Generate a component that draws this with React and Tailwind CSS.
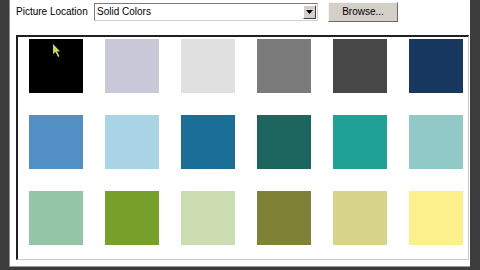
import React from "react";

const rows = [
  ["#000000", "#c8c8d8", "#e0e0e0", "#7a7a7a", "#474747", "#17375e"],
  ["#5290c6", "#a9d4e6", "#1a6e98", "#1d665f", "#1fa295", "#90c9c7"],
  ["#92c6a6", "#76a02a", "#cadcb0", "#7f8236", "#d7d38a", "#fbf08a"],
];

export default function App() {
  return (
    <div className="w-[480px] h-[270px] bg-[#3c3c3c] overflow-hidden" style={{ fontFamily: '"Liberation Sans", Arial, sans-serif' }}>
      <div className="ml-[9px] w-[461px] h-[267px] bg-white border-l border-[#8a8a8a] border-b border-b-[#9a9a9a] flex flex-col">
        <div className="flex items-center h-[24px] pl-[6px] pt-[0px]">
          <span className="text-[10px] text-black w-[78px] leading-none">Picture Location</span>
          <div className="w-[224px] h-[18px] border border-[#7a7a7a] border-r-[#d0d0d0] border-b-[#d0d0d0] flex items-center bg-white">
            <span className="text-[10px] text-black pl-[2px] flex-1 leading-none">Solid Colors</span>
            <div className="w-[13px] h-[14px] mr-[1px] bg-[#d4d0c8] border border-white border-r-[#404040] border-b-[#404040] flex items-center justify-center">
              <svg width="7" height="4" viewBox="0 0 7 4"><path d="M0 0h7L3.5 4z" fill="#000" /></svg>
            </div>
          </div>
          <div className="ml-[10px] w-[70px] h-[20px] bg-[#d4d0c8] border border-[#f4f4f4] border-r-[#6a6a6a] border-b-[#6a6a6a] flex items-center justify-center">
            <span className="text-[10px] text-black leading-none">Browse...</span>
          </div>
        </div>
        <div className="ml-[6px] mt-[11px] w-[453px] h-[225px] border-t-2 border-l-2 border-t-[#202020] border-l-[#202020] border-r border-b border-r-[#c8c8c8] border-b-[#c8c8c8] relative">
          <div className="grid grid-cols-[repeat(6,54px)] gap-x-[22px] gap-y-[22px] pl-[11px] pt-[2px]">
            {rows.flat().map((c, i) => (
              <div key={i} className="w-[54px] h-[54px]" style={{ backgroundColor: c }} />
            ))}
          </div>
          <svg className="absolute left-[34px] top-[6px]" width="10" height="16" viewBox="0 0 10 16">
            <path d="M1 1 L1 11 L3.5 9 L6 14 L7.5 13.3 L5 8.5 L8 8.2 Z" fill="#c8d850" />
          </svg>
        </div>
      </div>
    </div>
  );
}
